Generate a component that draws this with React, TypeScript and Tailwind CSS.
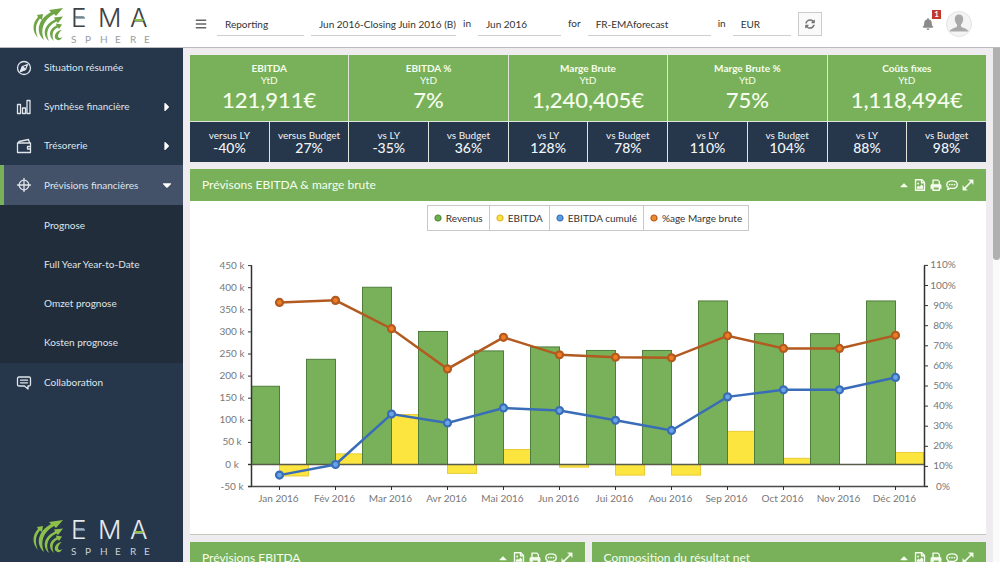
import { FaBars, FaBell, FaCaretDown, FaCaretRight, FaCaretUp, FaSyncAlt } from "react-icons/fa";
import type { ReactNode } from "react";

const MONTHS = ["Jan", "Fév", "Mar", "Avr", "Mai", "Jun", "Jui", "Aou", "Sep", "Oct", "Nov", "Déc"];
const REVENUS = [177, 238, 401, 301, 257, 266, 258, 258, 370, 296, 296, 370];
const EBITDA = [-26, 24, 113, -20, 34, -6, -24, -24, 75, 14, 0, 27];
const CUMUL = [-24, 0, 114, 94, 128, 122, 100, 77, 153, 169, 169, 197];
const MARGE = [91.6, 92.6, 78.5, 58.5, 74.2, 65.5, 64.3, 64, 75, 68.7, 68.7, 75.2];

const KPIS = [
  { title: "EBITDA", value: "121,911€", left: ["versus LY", "-40%"], right: ["versus Budget", "27%"] },
  { title: "EBITDA %", value: "7%", left: ["vs LY", "-35%"], right: ["vs Budget", "36%"] },
  { title: "Marge Brute", value: "1,240,405€", left: ["vs LY", "128%"], right: ["vs Budget", "78%"] },
  { title: "Marge Brute %", value: "75%", left: ["vs LY", "110%"], right: ["vs Budget", "104%"] },
  { title: "Coûts fixes", value: "1,118,494€", left: ["vs LY", "88%"], right: ["vs Budget", "98%"] },
];

const LEGEND = [
  { label: "Revenus", fill: "#6cb04f", stroke: "#4f8a3a" },
  { label: "EBITDA", fill: "#fbe23b", stroke: "#e0b52c" },
  { label: "EBITDA cumulé", fill: "#5a9de0", stroke: "#3a6db8" },
  { label: "%age Marge brute", fill: "#ee8a2e", stroke: "#b55a1e" },
];

const Logo = ({ dark = false }: { dark?: boolean }) => (
  <svg viewBox="0 -6 124 45" className="w-[124px] h-[45px]" role="img" aria-label="EMA Sphere">
    <g fill={dark ? "#8cc04a" : "#6fa544"}>
      <path d="M6 31C0 25 0 16 6 10L5 8 11 7 10 13 8 11.500C3 17 3 24 6 31z" />
      <path d="M12 33C3 25 6 12 19 5L17 3 31 1 24 9 22 7C11 13 8 23 12 33z" />
      <path d="M17 34C9 27 13 17 23 12.500L22 10.500 31 9.500 26 16 24.500 14.500C16 18 13 26 17 34z" />
      <path d="M22 34C15 28 18 21 24.500 18.500L24 16.500 30 17.500 27 22 26 20.500C21 22 19 28 22 34z" />
      <path d="M30 23C25.500 23 22 27 23 31 25 34 29 34 30 30 28 32 26 31 26 28.500 27 25.500 28.500 24 30 23z" />
    </g>
    <text
      x="39 66 98"
      y="20"
      fill={dark ? "#e3e9ee" : "#3f4245"}
      className="font-['Inter'] text-[26px]"
      fontWeight="300"
    >
      EMA
    </text>
    <path d="M43 11H53" stroke={dark ? "#7fa3bd" : "#7d9aa8"} strokeWidth="1.600" />
    <path d="M102.500 13H111.500" stroke="#8cc04a" strokeWidth="2" />
    <text
      x="39 53 68 83 98 112"
      y="36"
      fill={dark ? "#c9d1d8" : "#9a9c9e"}
      className="font-['Lato'] text-[10px]"
    >
      SPHERE
    </text>
  </svg>
);

const Line = ({ children, className }: { children: ReactNode; className?: string }) => (
  <svg
    viewBox="0 0 16 16"
    fill="none"
    stroke="currentColor"
    strokeWidth="1.300"
    strokeLinecap="round"
    strokeLinejoin="round"
    className={className ?? "size-4"}
    aria-hidden="true"
  >
    {children}
  </svg>
);

const CompassIcon = () => (
  <Line>
    <circle cx="8" cy="8" r="6.500" />
    <path d="M11.500 4.500 9.500 9.500 4.500 11.500 6.500 6.500z" />
    <path d="M6.500 6.500l3 3L4.500 11.500z" fill="currentColor" />
  </Line>
);

const BarsIcon = () => (
  <Line>
    <path d="M1.500 5.500h3v9h-3zM6.500 9h3v5.500h-3zM11 1.500h3v13h-3z" />
  </Line>
);

const WalletIcon = () => (
  <Line>
    <path d="M1.500 5h13v9.500h-13zM2 5l1-1.500L12.500 1.500 13.500 5M14.500 8.500h-3v2.500h3" />
  </Line>
);

const TargetIcon = () => (
  <Line>
    <circle cx="8" cy="8" r="4.800" />
    <path d="M8 1.500v13M1.500 8h13" />
  </Line>
);

const ChatIcon = () => (
  <Line>
    <path d="M3 2h10q1.500 0 1.500 1.500v6q0 1.500-1.500 1.500h-1v3L8.500 11H3Q1.500 11 1.500 9.500v-6Q1.500 2 3 2zM4.500 5.200h7M4.500 7.800h7" />
  </Line>
);

const NavRow = ({
  icon,
  label,
  caret,
  active = false,
}: {
  icon: ReactNode;
  label: string;
  caret?: ReactNode;
  active?: boolean;
}) => (
  <a
    href="#"
    className={
      active
        ? "flex items-center h-10 bg-[#435169] border-l-4 border-[#78b159] pl-3 pr-[9px]"
        : "flex items-center h-[39px] pl-4 pr-[9px]"
    }
  >
    {icon}
    <span className="flex-1 pl-3">{label}</span>
    {caret}
  </a>
);

const Sidebar = () => (
  <aside className="w-[183px] shrink-0 flex flex-col bg-[#26364b] text-[#dfe5ea] text-[10px]">
    <nav>
      <NavRow icon={<CompassIcon />} label="Situation résumée" />
      <NavRow icon={<BarsIcon />} label="Synthèse financière" caret={<FaCaretRight className="size-3.5 text-white" />} />
      <NavRow icon={<WalletIcon />} label="Trésorerie" caret={<FaCaretRight className="size-3.5 text-white" />} />
      <NavRow
        icon={<TargetIcon />}
        label="Prévisions financières"
        caret={<FaCaretDown className="size-3.5 text-white" />}
        active
      />
      <div className="bg-[#212d3b] py-px">
        {["Prognose", "Full Year Year-to-Date", "Omzet prognose", "Kosten prognose"].map((label) => (
          <a key={label} href="#" className="flex items-center h-[39px] pl-11">
            {label}
          </a>
        ))}
      </div>
      <NavRow icon={<ChatIcon />} label="Collaboration" />
    </nav>
    <div className="mt-auto pl-8 pb-1">
      <Logo dark />
    </div>
  </aside>
);

const Field = ({ label, value, className }: { label: string; value: string; className: string }) => (
  <input
    aria-label={label}
    defaultValue={value}
    className={`h-6 pl-2 pt-0.5 border-b border-[#cfcfcf] bg-transparent outline-none ${className}`}
  />
);

const Header = () => (
  <header className="h-12 shrink-0 flex items-center bg-white border-b border-[#b9bcc0] text-[10px] text-[#333]">
    <div className="w-[183px] shrink-0 pl-8">
      <Logo />
    </div>
    <button aria-label="Menu" className="ml-3 mr-[10px] text-[#666]">
      <FaBars className="size-3" />
    </button>
    <Field label="Type" value="Reporting" className="w-[87px] mr-[7px]" />
    <Field label="Version" value="Jun 2016-Closing Juin 2016 (B)" className="w-[145px]" />
    <span className="px-[7px]">in</span>
    <Field label="Période" value="Jun 2016" className="w-[83px]" />
    <span className="px-[7px]">for</span>
    <Field label="Société" value="FR-EMAforecast" className="w-[123px]" />
    <span className="px-[7px]">in</span>
    <Field label="Devise" value="EUR" className="w-[58px] mr-[7px]" />
    <button
      aria-label="Rafraîchir"
      className="size-6 flex items-center justify-center border border-[#ccc] bg-[#fafafa] text-[#777]"
    >
      <FaSyncAlt className="size-[10px]" />
    </button>
    <button aria-label="Notifications" className="relative ml-auto mr-3 text-[#8b8b8b]">
      <FaBell className="size-3" />
      <span className="absolute -top-2 left-[10px] w-[9px] h-[9px] bg-[#c0392b] text-white text-[8px] leading-[9px] font-bold text-center">
        1
      </span>
    </button>
    <button aria-label="Profil" className="mr-7">
      <svg viewBox="0 0 26 26" className="size-[26px]" aria-hidden="true">
        <circle cx="13" cy="13" r="12.500" fill="#f4f4f4" stroke="#e2e2e2" />
        <path
          d="M13 3.500c3 0 4.500 2 4.200 5-.2 2.500-1.200 4-2.200 5v2c1 1.500 6 1.500 7.500 5H3.500c1.500-3.500 6.500-3.500 7.500-5v-2c-1-1-2-2.500-2.200-5-.3-3 1.200-5 4.200-5z"
          fill="#a9a9a9"
        />
      </svg>
    </button>
  </header>
);

const KpiCard = ({ title, value, left, right }: (typeof KPIS)[number]) => (
  <div className="flex flex-col gap-px">
    <div className="h-[66px] pt-[7px] bg-[#78b159] text-center text-[#f6fdee]">
      <div className="text-[10px] leading-3 font-bold">{title}</div>
      <div className="text-[10px] leading-3">YtD</div>
      <div className="text-[22px] leading-7 font-medium">{value}</div>
    </div>
    <div className="grid grid-cols-2 gap-px">
      {[left, right].map(([label, pct]) => (
        <div key={label} className="h-10 pt-[7px] bg-[#26364b] text-center text-[#f2f5f8]">
          <div className="text-[10px] leading-3">{label}</div>
          <div className="text-[14px] leading-[14px] font-medium">{pct}</div>
        </div>
      ))}
    </div>
  </div>
);

const PanelTools = () => (
  <div className="flex items-center gap-1">
    <button aria-label="Réduire">
      <FaCaretUp className="size-3" />
    </button>
    <button aria-label="Exporter en image">
      <Line className="size-3">
        <path d="M2 1h8.500L14 4.500V15H2zM10 1v4h4" strokeWidth="1.800" />
        <path d="M4 13v-2l2-2 1.500 1.500L10 7.500l2 2V13z" fill="currentColor" strokeWidth="0.500" />
        <circle cx="5.500" cy="6" r="1.200" fill="currentColor" stroke="none" />
      </Line>
    </button>
    <button aria-label="Imprimer">
      <Line className="size-3">
        <path d="M4 7V1.500h6.500L12.500 3.500V7M4 10.500h8.500V15H4z" strokeWidth="1.800" />
        <path d="M1 13V8.500Q1 7 2.500 7h11Q15 7 15 8.500V13h-2.500v-3H4v3z" fill="currentColor" strokeWidth="0.500" />
      </Line>
    </button>
    <button aria-label="Commenter">
      <Line className="size-3">
        <path d="M8 2.500c4 0 7 2 7 5s-3 5-7 5c-1 0-1.800-.1-2.500-.3Q4 14 2 14.200q1.300-1.400 1-3C1.700 10.300 1 9 1 7.500c0-3 3-5 7-5z" strokeWidth="1.800" />
        <path d="M4.800 7.500h.1M8 7.500h.1M11.200 7.500h.1" strokeWidth="2.200" />
      </Line>
    </button>
    <button aria-label="Agrandir">
      <Line className="size-3">
        <path d="M3 13L13 3" strokeWidth="2.200" />
        <path d="M9 1h6v6zM1 9v6h6z" fill="currentColor" strokeWidth="0.500" />
      </Line>
    </button>
  </div>
);

const Panel = ({ title, children }: { title: string; children?: ReactNode }) => (
  <section className="bg-white border-b border-[#c3c9bd]">
    <div className="h-8 px-3 flex items-center justify-between bg-[#78b159] text-[#f6fdee]">
      <h2 className="text-xs">{title}</h2>
      <PanelTools />
    </div>
    {children}
  </section>
);

// plot area in chart units: 12 slots of 56, 0 k at y=222.500
const slot = (i: number) => 89.5 + 56 * i;
const yK = (v: number) => 222.5 - v * 0.442;
const yPct = (v: number) => 244.5 - v * 2.01;

const Series = ({ ys, stroke, fill }: { ys: number[]; stroke: string; fill: string }) => (
  <g stroke={stroke}>
    <polyline points={ys.map((y, i) => `${slot(i)},${y}`).join(" ")} fill="none" strokeWidth="2.500" />
    {ys.map((y, i) => (
      <circle key={i} cx={slot(i)} cy={y} r="3.500" fill={fill} strokeWidth="2.200" />
    ))}
  </g>
);

const Chart = () => (
  <svg viewBox="0 0 796 292" className="block w-full" role="img" aria-label="Prévisons EBITDA & marge brute">
    <g fill="#fde53f" stroke="#e9cb35">
      {EBITDA.map((v, i) =>
        v === 0 ? null : (
          <rect
            key={i}
            x={slot(i)}
            y={Math.min(yK(v), yK(0))}
            width={i === 11 ? 28 : 29}
            height={Math.abs(yK(v) - yK(0))}
          />
        )
      )}
    </g>
    <g fill="#78b159" stroke="#4f7d3c">
      {REVENUS.map((v, i) => {
        const w = i === 0 ? 28 : 29;
        return <rect key={i} x={slot(i) - w} y={yK(v)} width={w} height={yK(0) - yK(v)} />;
      })}
    </g>

    <path d={`M61.500 ${yK(450)}V244.500M734.500 ${yPct(110)}V244.500`} stroke="#333" strokeWidth="1.500" />
    <path d="M58 222.500H734" stroke="#5a5a4a" strokeWidth="1.500" />
    <path d="M58 244.500H738" stroke="#4a4a4a" strokeWidth="1.500" />

    <Series ys={MARGE.map(yPct)} stroke="#b25a20" fill="#ee7d22" />
    <Series ys={CUMUL.map(yK)} stroke="#3a6db8" fill="#69a5e8" />

    <g className="text-[10px]" fill="#777" textAnchor="middle">
      {Array.from({ length: 11 }).map((_, i) => {
        const v = 450 - 50 * i;
        return (
          <g key={v}>
            <path d={`M58 ${yK(v)}h4`} stroke="#333" />
            <text x="42" y={yK(v) + 3}>
              {v} k
            </text>
          </g>
        );
      })}
      {Array.from({ length: 12 }).map((_, i) => {
        const v = 110 - 10 * i;
        return (
          <g key={v}>
            <path d={`M734 ${yPct(v)}h4`} stroke="#333" />
            <text x="753" y={yPct(v) + 3}>
              {v}%
            </text>
          </g>
        );
      })}
      {MONTHS.map((m, i) => (
        <g key={m}>
          <path d={`M${slot(i)} 244v4`} stroke="#333" />
          <text x={slot(i) - 1} y="260">
            {m} 2016
          </text>
        </g>
      ))}
    </g>
  </svg>
);

const Legend = () => (
  <ul className="w-fit mx-auto h-[26px] flex items-stretch border border-[#c8c8c8] divide-x divide-[#c8c8c8] text-[10px] text-[#333]">
    {LEGEND.map(({ label, fill, stroke }) => (
      <li key={label} className="flex items-center gap-1 px-[6px]">
        <svg viewBox="0 0 8 8" className="size-2" aria-hidden="true">
          <circle cx="4" cy="4" r="3" fill={fill} stroke={stroke} strokeWidth="1.200" />
        </svg>
        {label}
      </li>
    ))}
  </ul>
);

const App = () => {
  return (
    <div className="h-screen flex flex-col overflow-hidden font-['Lato',sans-serif]">
      <Header />
      <div className="flex-1 min-h-0 flex">
        <Sidebar />
        <main className="flex-1 min-w-0 overflow-hidden p-[7px] flex flex-col gap-[7px] bg-[#eeecef]">
          <div className="shrink-0 grid grid-cols-5 gap-px bg-[#dfe6dc]">
            {KPIS.map((kpi) => (
              <KpiCard key={kpi.title} {...kpi} />
            ))}
          </div>
          <div className="shrink-0">
            <Panel title="Prévisons EBITDA & marge brute">
              <div className="pt-1 flex flex-col gap-[11px]">
                <Legend />
                <Chart />
              </div>
            </Panel>
          </div>
          <div className="shrink-0 grid grid-cols-2 gap-[7px]">
            <Panel title="Prévisions EBITDA" />
            <Panel title="Composition du résultat net" />
          </div>
        </main>
        <div className="w-[7px] shrink-0 bg-[#fafafa]">
          <div className="h-[212px] rounded-b bg-[#b0b0b0]" />
        </div>
      </div>
    </div>
  );
};

export default App;
